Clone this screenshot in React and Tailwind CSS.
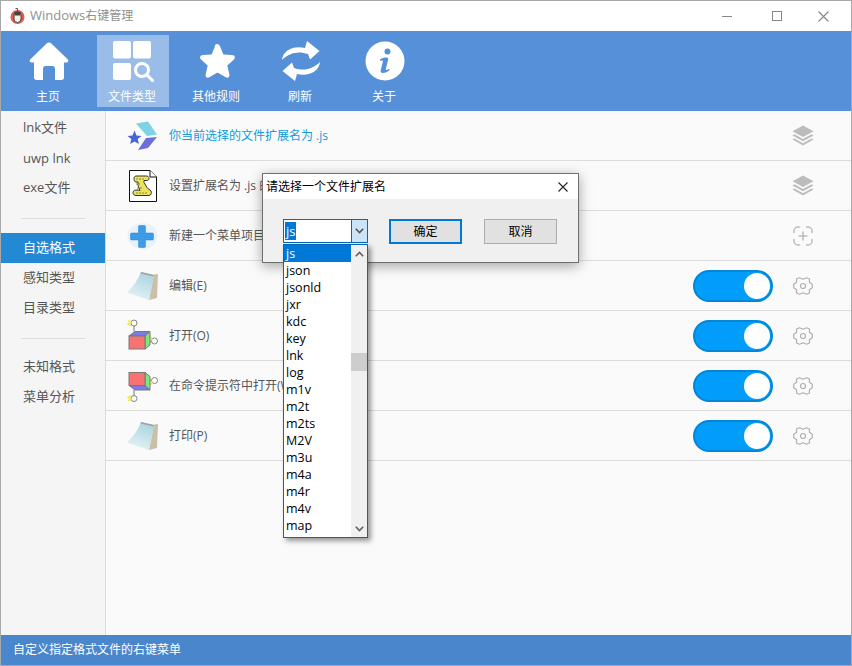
import React from "react";

function Home() {
  return (
    <svg width="40" height="40" viewBox="0 0 40 40" fill="#fff">
      <path d="M20 1.500c1 0 1.800.4 2.600 1.200l16 15.600c1.400 1.400.6 3.200-1.200 3.200H35v15c0 1.600-1 2.500-2.400 2.500H26V28c0-1.800-1-3-2.500-3h-7c-1.500 0-2.500 1.200-2.500 3v11H7.400C6 39 5 38.100 5 36.500v-15H2.600C.8 21.500 0 19.700 1.400 18.300l16-15.600C18.200 1.900 19 1.500 20 1.500z" />
    </svg>
  );
}

function Types() {
  return (
    <svg width="42" height="42" viewBox="0 0 42 42" fill="#fff">
      <rect x="1" y="1" width="18" height="17.500" rx="2" />
      <rect x="21" y="1" width="18" height="17.500" rx="2" />
      <rect x="1" y="23" width="18" height="17" rx="2" />
      <circle cx="30" cy="30" r="6.500" fill="none" stroke="#fff" strokeWidth="3" />
      <path d="M35 35l5.500 5.500" stroke="#fff" strokeWidth="3" strokeLinecap="round" />
    </svg>
  );
}

function Star() {
  return (
    <svg width="40" height="40" viewBox="0 0 40 40" fill="#fff">
      <path d="M20 3c1.500 0 2.500 1 3.100 2.400l3.300 8 8.500.7c3.200.3 4 2.600 1.800 4.700l-6.400 5.700 2 8.500c.7 3.200-1.300 4.600-4 3l-7.800-4.600L12.700 36c-2.700 1.600-4.700.2-4-3l2-8.500-6.400-5.700c-2.200-2.100-1.400-4.400 1.800-4.700l8.500-.7 3.300-8C17.500 4 18.500 3 20 3z" />
    </svg>
  );
}

function Refresh() {
  return (
    <svg width="40" height="40" viewBox="0 0 40 40" fill="#fff">
      <path d="M1 19C2 9.500 12 4.500 24 7L26 0l12.500 10L29 18.500 27 13C17 9.500 8 12 1 19z" />
      <path d="M39 21c-1 9.500-11 14.500-23 12l-2 7L1.500 30 11 21.500 13 27c10 3.500 19 1 26-6z" />
    </svg>
  );
}

function Info() {
  return (
    <svg width="40" height="40" viewBox="0 0 40 40">
      <circle cx="20" cy="20" r="19.500" fill="#fff" />
      <circle cx="22.500" cy="10.500" r="3" fill="#5590d8" />
      <path d="M15 18.500c2-1.500 4-2 6.500-2 1.500 0 2 1 1.600 2.500l-2.300 9c-.2 1 .4 1.300 1.200 1 .6-.2 1.400-.7 2-1.200l.7 1.200c-2 2-4.500 3-6.800 3-2 0-2.600-1.200-2.200-2.800l2.200-8.700c.2-1-.4-1.300-1.100-1-.5.2-1 .4-1.300.6z" fill="#5590d8" />
    </svg>
  );
}

function NavItem({ icon, label, active }) {
  return (
    <div className={`flex h-[72px] w-[72px] flex-col items-center pt-[6px] ${active ? "bg-[#9abce8]" : ""}`}>
      <div className="flex h-[40px] items-center justify-center">{icon}</div>
      <span className="mr-[2px] mt-[8px] text-[12px] leading-[16px] text-white">{label}</span>
    </div>
  );
}

function Layers() {
  return (
    <svg className="-mr-[1px]" width="22" height="22" viewBox="0 0 22 22" fill="#bcbcbc">
      <path d="M11 .5 21.500 6.200 11 12 .5 6.200z" />
      <path d="M2.500 9.300 11 14l8.500-4.700 2 1.100L11 16.200.5 10.400z" />
      <path d="M2.500 13.500 11 18.200l8.500-4.700 2 1.100L11 20.400.5 14.600z" />
    </svg>
  );
}

function AddFrame() {
  return (
    <svg width="20" height="20" viewBox="0 0 20 20" fill="none" stroke="#bcbcbc" strokeWidth="1.500" strokeLinecap="round">
      <path d="M6.500 1H5a4 4 0 0 0-4 4v1.500" />
      <path d="M13.500 1H15a4 4 0 0 1 4 4v1.500" />
      <path d="M6.500 19H5a4 4 0 0 1-4-4v-1.500" />
      <path d="M13.500 19H15a4 4 0 0 0 4-4v-1.500" />
      <path d="M10 6v8M6 10h8" />
    </svg>
  );
}

function Gear() {
  return (
    <svg width="20" height="20" viewBox="0 0 20 20" fill="none" stroke="#b0b0b0" strokeWidth="1.200" strokeLinejoin="round">
      <path d="M10 3.200 13.500 1.800 16.500 3 16.400 6.200 19.300 8.300V11.700L16.400 13.800 16.500 17 13.500 18.200 10 16.800 6.500 18.200 3.500 17 3.600 13.800.7 11.700V8.300L3.600 6.200 3.500 3 6.500 1.800Z" />
      <circle cx="10" cy="10" r="2.500" />
    </svg>
  );
}

function Toggle() {
  return (
    <div className="flex h-[32px] w-[80px] items-center justify-end rounded-full border-[2px] border-[#0287d8] bg-[#029cfa] pr-[1px]">
      <div className="h-[26px] w-[26px] rounded-full bg-white" />
    </div>
  );
}

function ShapeIcon() {
  return (
    <svg width="32" height="32" viewBox="0 0 32 32">
      <path d="M9 3.500 21 1.500 30 14.500 20 16z" fill="#7dd3e3" />
      <path d="M30 17 21 28 11 30 19 18z" fill="#6a6fdc" />
      <path d="M7.500 10.500l2 5 5 .4-3.800 3.200 1.200 5-4.400-2.700-4.300 2.700 1.100-5L.5 15.900l5-.4z" fill="#4565d8" />
    </svg>
  );
}

function ScriptIcon() {
  return (
    <svg width="28" height="32" viewBox="0 0 28 32">
      <path d="M.5.500H21L27.500 7v24.500H.5z" fill="#fff" stroke="#111" />
      <path d="M21 .5V7h6.500" fill="#fff" stroke="#111" />
      <path d="M5 8.500c0-2 1-2.500 3-2.500h9c2 0 3 1 3 2.500s-1 2-2 2h-3v2l3 5c1 2 3 2 4 3.500s0 4.500-2 4.500H8c-3 0-4-1-4-3s2-2.500 5-2.500l2 .5-2-5V12H7c-1.500 0-2-2-2-3.500z" fill="#ece25c" stroke="#333" strokeWidth="1" />
      <path d="M7 9h8M7 14h4M8 18h6M7 23h12" stroke="#8a8a40" strokeWidth="1" strokeDasharray="2 1" />
    </svg>
  );
}

function PlusIcon() {
  return (
    <svg width="32" height="28" viewBox="0 0 32 28">
      <ellipse cx="15.500" cy="14" rx="15" ry="13" fill="#e8f2fb" />
      <path d="M12.500 3.500h5c.6 0 1 .4 1 1V11h7c.6 0 1 .4 1 1v5c0 .6-.4 1-1 1h-7v6.500c0 .6-.4 1-1 1h-5c-.6 0-1-.4-1-1V18h-7c-.6 0-1-.4-1-1v-5c0-.6.4-1 1-1h7V4.500c0-.6.4-1 1-1z" fill="#3d9be8" stroke="#2a80d0" strokeWidth=".5" />
    </svg>
  );
}

function NotepadIcon({ id }) {
  return (
    <svg width="32" height="30" viewBox="0 0 32 30">
      <defs>
        <linearGradient id={id} x1="0.700" y1="0" x2="0.300" y2="1">
          <stop offset="0" stopColor="#a9d4df" />
          <stop offset="1" stopColor="#e6f3f6" />
        </linearGradient>
      </defs>
      <path d="M27 3.500 31 3 30 27 22 29z" fill="#cbbfa8" />
      <path d="M14 1 27 4 22 29 0 21.500C6 16 11 9 14 1z" fill={`url(#${id})`} />
      <path d="M14 1 27 4 26.700 5.500 13.500 2.500z" fill="#a0a0a0" />
    </svg>
  );
}

function CubeIcon({ flip }) {
  return (
    <svg width="32" height="34" viewBox="0 0 32 34">
      <g transform={flip ? "translate(0 33.500) scale(1 -1)" : undefined}>
        <path d="M7 12.500V7M23 22h2" stroke="#777" fill="none" />
        <circle cx="7" cy="4" r="3" fill="#fff" stroke="#666" strokeWidth=".8" />
        <path d="M1 1.500l3 2-3 1.500 3 2" fill="none" stroke="#f0e83c" strokeWidth="1.500" />
        <circle cx="27.500" cy="22" r="3" fill="#fff" stroke="#666" strokeWidth=".8" />
        <path d="M23.500 17.500l1.500 3-2 1.500" fill="none" stroke="#f0e83c" strokeWidth="1.500" />
        <path d="M2 17 8 12.500H23L18 17z" fill="#7a7ae8" stroke="#777" />
        <path d="M18 17 23 12.500V26L18 30z" fill="#7ae87a" stroke="#777" />
        <rect x="2" y="17" width="16" height="13" fill="#f87272" stroke="#777" />
      </g>
    </svg>
  );
}

function Row({ icon, text, blue, right }) {
  return (
    <div className="flex h-[50px] items-center border-b border-[#dcdcdc] pr-[38px]">
      <div className="flex w-[63px] shrink-0 items-center justify-center pl-[10px]">{icon}</div>
      <span className={`flex-1 text-[12px] leading-[16px] ${blue ? "text-[#0f9bdc]" : "text-[#555]"}`}>{text}</span>
      {right}
    </div>
  );
}

function Side({ label, active, h = 30 }) {
  return (
    <div
      className={`flex items-center pl-[22px] text-[13px] ${active ? "bg-[#2389d5] text-white" : "text-[#555]"}`}
      style={{ height: h }}
    >
      {label}
    </div>
  );
}

const exts = ["js","json","jsonld","jxr","kdc","key","lnk","log","m1v","m2t","m2ts","M2V","m3u","m4a","m4r","m4v","map"];

function Chevron({ up, cls = "#555" }) {
  return (
    <svg width="9" height="6" viewBox="0 0 9 6" fill="none" stroke={cls} strokeWidth="1.600">
      <path d={up ? "M.8 5.200 4.500 1.500l3.700 3.700" : "M.8.8 4.500 4.500 8.200.8"} />
    </svg>
  );
}

function Dialog() {
  return (
    <div className="absolute left-[261px] top-[172px] flex h-[90px] w-[317px] flex-col border border-[#6f6f6f] bg-[#f0f0f0] shadow-[0_3px_12px_rgba(0,0,0,0.35)]">
      <div className="flex h-[25px] items-center justify-between bg-white pl-[3px] pr-[10px]">
        <span className="text-[12px] leading-[16px] text-black">请选择一个文件扩展名</span>
        <svg width="10" height="10" viewBox="0 0 10 10" stroke="#222" strokeWidth="1.100"><path d="M.5.5l9 9M9.500.5l-9 9" /></svg>
      </div>
      <div className="flex items-start pl-[20px] pt-[20px]">
        <div className="flex h-[24px] w-[85px] border border-[#0a66b8] bg-white">
          <div className="flex flex-1 items-center pl-[1px]">
            <span className="bg-[#0078d7] px-[1px] text-[13px] leading-[18px] text-white">js</span>
          </div>
          <div className="flex w-[16px] items-center justify-center border-l border-[#0a66b8] bg-[#cce4f7]">
            <Chevron />
          </div>
        </div>
        <button className="ml-[21px] h-[25px] w-[73px] border-[2px] border-[#0078d7] bg-[#e1e1e1] text-[12px] text-black">确定</button>
        <button className="ml-[22px] h-[25px] w-[73px] border border-[#adadad] bg-[#e1e1e1] text-[12px] text-black">取消</button>
      </div>
    </div>
  );
}

function Dropdown() {
  return (
    <div className="absolute left-[282px] top-[243px] flex h-[294px] w-[85px] border border-[#0a66b8] bg-white shadow-[3px_3px_5px_rgba(0,0,0,0.4)]">
      <div className="flex-1">
        {exts.map((e, i) => (
          <div
            key={e}
            className={`h-[17px] pl-[2px] text-[12.5px] leading-[17px] ${i === 0 ? "bg-[#0078d7] text-white" : "text-black"}`}
          >
            {e}
          </div>
        ))}
      </div>
      <div className="flex w-[16px] flex-col items-center bg-[#f0f0f0]">
        <div className="flex h-[17px] items-center justify-center"><Chevron up cls="#606060" /></div>
        <div className="mt-[91px] h-[18px] w-full bg-[#cdcdcd]" />
        <div className="flex-1" />
        <div className="flex h-[17px] items-center justify-center"><Chevron cls="#606060" /></div>
      </div>
    </div>
  );
}

const rowRight = (
  <div className="flex items-center gap-[20px]"><Toggle /><Gear /></div>
);

export default function App() {
  return (
    <div
      className="relative flex h-[666px] w-[852px] flex-col overflow-hidden border border-[#a8a8a8] bg-[#fafafa]"
      style={{ fontFamily: '"Open Sans","Noto Sans CJK SC",sans-serif' }}
    >
      <div className="flex h-[30px] shrink-0 items-center bg-white pl-[9px]">
        <svg width="16" height="18" viewBox="0 0 16 18">
          <circle cx="7.500" cy="10" r="7" fill="#e85a48" />
          <rect x="4" y="4.500" width="7" height="11" rx="3.500" fill="#f4f0ea" stroke="#444" />
          <rect x="4.700" y="5" width="5.600" height="3.500" fill="#444" />
          <path d="M7.500 5V1.500h-2" fill="none" stroke="#555" />
        </svg>
        <span className="ml-[4px] text-[12px] text-[#8f8f8f]"><span className="text-[13px]">Windows</span>右键管理</span>
        <div className="flex-1" />
        <div className="flex items-center pr-[22px]">
          <div className="h-[1px] w-[10px] bg-[#888]" />
          <div className="ml-[40px] h-[10px] w-[10px] border border-[#888]" />
          <svg className="ml-[36px]" width="11" height="11" viewBox="0 0 11 11" stroke="#888" strokeWidth="1.100"><path d="M.5.5l10 10M10.500.5l-10 10" /></svg>
        </div>
      </div>

      <div className="flex h-[80px] shrink-0 items-start gap-[12px] bg-[#5590d8] pl-[12px] pt-[4px]">
        <NavItem icon={<Home />} label="主页" />
        <NavItem icon={<Types />} label="文件类型" active />
        <NavItem icon={<Star />} label="其他规则" />
        <NavItem icon={<Refresh />} label="刷新" />
        <NavItem icon={<Info />} label="关于" />
      </div>

      <div className="flex flex-1">
        <div className="w-[105px] shrink-0 border-r border-[#dcdcdc] bg-[#f5f5f5] pt-[2px]">
          <Side label="lnk文件" />
          <Side label="uwp lnk" h={32} />
          <Side label="exe文件" h={26} />
          <div className="mx-[20px] mb-[14px] mt-[17px] h-[1px] bg-[#dcdcdc]" />
          <Side label="自选格式" active />
          <Side label="感知类型" />
          <Side label="目录类型" />
          <div className="mx-[20px] mb-[13px] mt-[15px] h-[1px] bg-[#dcdcdc]" />
          <Side label="未知格式" />
          <Side label="菜单分析" />
        </div>
        <div className="flex-1">
          <Row icon={<ShapeIcon />} text="你当前选择的文件扩展名为 .js" blue right={<Layers />} />
          <Row icon={<ScriptIcon />} text="设置扩展名为 .js 的文件" right={<Layers />} />
          <Row icon={<PlusIcon />} text="新建一个菜单项目" right={<AddFrame />} />
          <Row icon={<NotepadIcon id="pad-a" />} text="编辑(E)" right={rowRight} />
          <Row icon={<CubeIcon />} text="打开(O)" right={rowRight} />
          <Row icon={<CubeIcon flip />} text="在命令提示符中打开(W)" right={rowRight} />
          <Row icon={<NotepadIcon id="pad-b" />} text="打印(P)" right={rowRight} />
        </div>
      </div>

      <div className="flex h-[30px] shrink-0 items-center bg-[#4a86cc] pl-[12px] text-[12px] text-white">
        自定义指定格式文件的右键菜单
      </div>

      <Dialog />
      <Dropdown />
    </div>
  );
}
